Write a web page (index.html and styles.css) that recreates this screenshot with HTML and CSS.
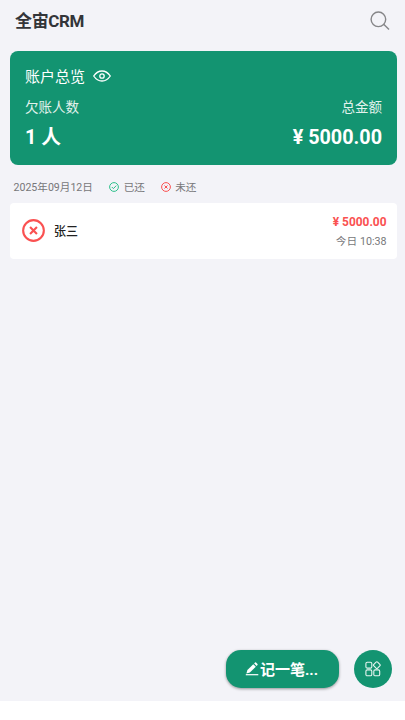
FILE: index.html
```html
<!DOCTYPE html>
<html lang="zh-CN">
<head>
<meta charset="utf-8">
<title>全宙CRM</title>
<link rel="stylesheet" href="styles.css">
</head>
<body>
<div class="app">
  <header class="header">
    <h1 class="title">全宙CRM</h1>
    <svg class="search" viewBox="0 0 20 20"><circle cx="8.4" cy="8.3" r="7.3"/><path d="M13.7 13.3l5.3 5.3"/></svg>
  </header>
  <section class="overview">
    <div class="overview-head">
      <span>账户总览</span>
      <svg class="eye" viewBox="0 0 18 12"><path d="M.7 6C3 2.6 5.700 1 9 1s6 1.600 8.300 5C15 9.400 12.300 11 9 11S3 9.400.7 6z"/><circle cx="9" cy="6" r="2.200"/></svg>
    </div>
    <div class="row labels"><span>欠账人数</span><span>总金额</span></div>
    <div class="row values"><span>1 人</span><span>¥ 5000.00</span></div>
  </section>
  <div class="legend">
    <span class="date">2025年09月12日</span>
    <svg class="mark paid" viewBox="0 0 10 10"><circle cx="5" cy="5" r="4.400"/><path d="M2.800 5l1.600 1.600 2.900-3"/></svg>
    <span class="paid-label">已还</span>
    <svg class="mark unpaid" viewBox="0 0 10 10"><circle cx="5" cy="5" r="4.400"/><path d="M3.500 3.500l3 3m0-3l-3 3"/></svg>
    <span>未还</span>
  </div>
  <article class="record">
    <svg class="status" viewBox="0 0 22 22"><circle cx="11" cy="11" r="9.900"/><path d="M7.700 7.700l6.600 6.600m0-6.600l-6.600 6.600"/></svg>
    <span class="name">张三</span>
    <div class="detail">
      <span class="amount">¥ 5000.00</span>
      <span class="time">今日 10:38</span>
    </div>
  </article>
  <footer class="actions">
    <button class="add">
      <svg class="pen" viewBox="0 0 14 14"><path class="line" d="M.8 12.700h12.500"/><path d="M1.400 11.500l1-3.500 5.900-5.800 2.500 2.500-5.900 5.800z"/><path d="M9.100 1.400l.9-.9q.5-.4 1 0l1.500 1.500q.4.500 0 1l-.9.900z"/></svg>
      <span>记一笔...</span>
    </button>
    <button class="menu" aria-label="菜单">
      <svg viewBox="0 0 16 16"><rect x=".9" y="1.200" width="5.900" height="5.900" rx="1.400"/><rect x=".9" y="8.900" width="5.900" height="5.900" rx="1.400"/><rect x="8.800" y="8.900" width="5.900" height="5.900" rx="1.400"/><rect x="9.200" y="1.500" width="5.300" height="5.300" rx="1.100" transform="rotate(45 11.850 4.150)"/></svg>
    </button>
  </footer>
</div>
</body>
</html>
```
FILE: styles.css
```css
* { box-sizing: border-box; }
body {
  margin: 0;
  background: #fff;
  font-family: Roboto, "Noto Sans CJK SC", sans-serif;
  color: #333;
}
svg { display: block; flex: none; fill: none; }
button { border: 0; padding: 0; font: inherit; color: #fff; background: #139471; }
.app {
  height: 701px;
  padding: 0 8px 0 10px;
  background: #f3f3f8;
  display: flex;
  flex-direction: column;
}
.header {
  height: 50px;
  padding: 0 7px 9px 5px;
  display: flex;
  align-items: center;
  justify-content: space-between;
}
.title { margin: 0; font-size: 17px; line-height: 24px; font-weight: 700; letter-spacing: -.35px; color: #333539; }
.search { width: 20px; height: 20px; stroke: #858588; stroke-width: 1.4; }
.overview {
  height: 114px;
  margin-top: .5px;
  padding: 13px 15px 0;
  border-radius: 8px;
  background: #139471;
  color: #fff;
}
.overview-head { display: flex; align-items: center; gap: 8px; height: 24px; font-size: 15px; }
.eye { width: 18px; height: 12px; margin-top: 1px; stroke: #fff; stroke-width: 1.3; }
.row { display: flex; justify-content: space-between; align-items: center; }
.labels { height: 24px; margin-top: 6px; font-size: 13.500px; color: #e2f2ed; }
.values { height: 28px; margin-top: 5px; font-size: 19.800px; font-weight: 700; }
.values span:first-child { margin-top: -2px; }
.values span:last-child { margin-top: 2px; }
.legend {
  height: 38px;
  padding: 6px 0 0 3.500px;
  display: flex;
  align-items: center;
  font-size: 10.600px;
  color: #77777a;
}
.mark { width: 10px; height: 10px; margin: 0 5px 0 15.800px; }
.paid { stroke: #2fc08c; }
.unpaid { margin-right: 4.500px; stroke: #fa5151; }
.record {
  height: 56px;
  margin-right: .5px;
  padding: 0 10px 0 12px;
  border-radius: 4px;
  background: #fff;
  display: flex;
  align-items: center;
}
.status { width: 23px; height: 23px; stroke: #fa5151; stroke-width: 2; }
.name { margin-left: 9px; font-size: 12px; color: #222; font-weight: 500; }
.detail { margin: 2px 0 0 auto; display: flex; flex-direction: column; align-items: flex-end; }
.amount { font-size: 11.900px; line-height: 19px; font-weight: 700; color: #fa5151; }
.time { font-size: 10.700px; line-height: 19px; color: #77777a; }
.actions {
  margin-top: auto;
  padding: 0 5px 13px 0;
  display: flex;
  justify-content: flex-end;
  gap: 15px;
}
.add {
  width: 113px;
  height: 38px;
  padding: 0 2px 1px 0;
  border-radius: 15px;
  box-shadow: 0 1px 3px rgba(0, 0, 0, .4);
  display: flex;
  align-items: center;
  justify-content: center;
  font-size: 15px;
  font-weight: 700;
}
.pen { width: 14px; height: 14px; fill: #fff; margin-right: 1px; }
.line { stroke: #fff; stroke-width: 1.2; }
.menu {
  width: 38px;
  height: 38px;
  border-radius: 50%;
  display: flex;
  align-items: center;
  justify-content: center;
}
.menu svg { width: 16px; height: 16px; stroke: #e8f5f1; stroke-width: 1.1; }
```
